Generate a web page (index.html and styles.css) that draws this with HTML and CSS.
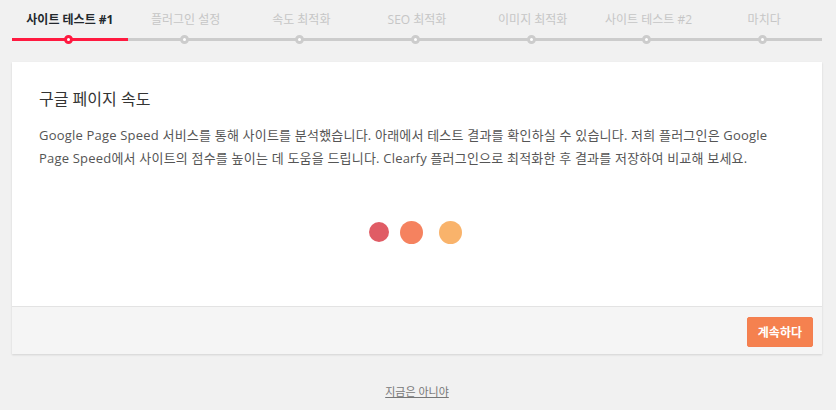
FILE: index.html
```
<!DOCTYPE html>
<html>
<head>
	<meta charset="UTF-8">
	<title>Clearfy 설정 마법사</title>
	<link rel="stylesheet" href="styles.css">
</head>
<body>
	<div id="wizard">
		<ul class="steps">
			<li class="step active"><span class="step_label">사이트 테스트 #1</span><span class="step_track"></span></li>
			<li class="step"><span class="step_label">플러그인 설정</span><span class="step_track"></span></li>
			<li class="step"><span class="step_label">속도 최적화</span><span class="step_track"></span></li>
			<li class="step"><span class="step_label">SEO 최적화</span><span class="step_track"></span></li>
			<li class="step"><span class="step_label">이미지 최적화</span><span class="step_track"></span></li>
			<li class="step"><span class="step_label">사이트 테스트 #2</span><span class="step_track"></span></li>
			<li class="step"><span class="step_label">마치다</span><span class="step_track"></span></li>
		</ul>

		<div class="card">
			<div class="card_body">
				<h2>구글 페이지 속도</h2>
				<p>Google Page Speed 서비스를 통해 사이트를 분석했습니다. 아래에서 테스트 결과를 확인하실 수 있습니다. 저희 플러그인은 Google Page Speed에서 사이트의 점수를 높이는 데 도움을 드립니다. Clearfy 플러그인으로 최적화한 후 결과를 저장하여 비교해 보세요.</p>
				<div class="loader">
					<span class="dot dot_red"></span>
					<span class="dot dot_orange"></span>
					<span class="dot dot_yellow"></span>
				</div>
			</div>
			<div class="card_footer">
				<button class="btn_next">계속하다</button>
			</div>
		</div>

		<div class="skip">
			<a href="#">지금은 아니야</a>
		</div>
	</div>
</body>
</html>
```

FILE: styles.css
```
body {
	margin: 0;
	padding: 0;
	background: #f1f1f1;
	font-family: "Open Sans", "Noto Sans CJK KR", sans-serif;
	color: #555;
}

#wizard {
	padding: 0 14px 0 12px;
}

.steps {
	display: flex;
	list-style: none;
	margin: 0;
	padding: 12px 0 0 0;
}

.step {
	flex: 1;
	text-align: center;
}

.step_label {
	display: block;
	font-size: 12px;
	line-height: 16px;
	color: #c6c6c6;
	white-space: nowrap;
}

.step.active .step_label {
	color: #23282d;
	font-weight: 700;
}

.step_track {
	display: block;
	position: relative;
	height: 3px;
	margin-top: 10px;
	background: #cccccc;
}

.step_track::after {
	content: "";
	position: absolute;
	left: 50%;
	top: -3px;
	margin-left: -6px;
	width: 3px;
	height: 3px;
	border: 3px solid #cccccc;
	border-radius: 50%;
	background: #fff;
}

.step.active .step_track {
	background: #ff1a40;
}

.step.active .step_track::after {
	border-color: #ff1a40;
}

.card {
	margin-top: 21px;
	background: #fff;
	box-shadow: 0 1px 2px rgba(0, 0, 0, 0.13);
}

.card_body {
	padding: 26px 27px 62px 27px;
}

.card_body h2 {
	margin: 0;
	font-size: 16px;
	line-height: 22px;
	font-weight: 400;
	color: #333;
}

.card_body p {
	margin: 14px 0 0 0;
	font-size: 13px;
	line-height: 23px;
	letter-spacing: 0.2px;
	color: #555;
}

.loader {
	display: flex;
	justify-content: center;
	align-items: center;
	height: 24px;
	margin-top: 50px;
	padding-right: 4px;
}

.dot {
	display: block;
	border-radius: 50%;
}

.dot_red {
	width: 20px;
	height: 20px;
	background: #e05c65;
}

.dot_orange {
	width: 23px;
	height: 23px;
	margin-left: 11px;
	background: #f5825f;
}

.dot_yellow {
	width: 23px;
	height: 23px;
	margin-left: 16px;
	background: #f9b36b;
}

.card_footer {
	display: flex;
	justify-content: flex-end;
	padding: 10px 9px 7px 9px;
	background: #f5f5f5;
	border-top: 1px solid #e3e3e3;
}

.btn_next {
	height: 30px;
	padding: 0 10px;
	border: 1px solid #f47f50;
	border-radius: 2px;
	background: #f5814f;
	color: #fff;
	font-family: "Open Sans", "Noto Sans CJK KR", sans-serif;
	font-size: 12px;
	font-weight: 600;
	cursor: pointer;
}

.skip {
	margin-top: 30px;
	text-align: center;
	font-size: 11px;
	line-height: 16px;
}

.skip a {
	color: #777;
}
```
